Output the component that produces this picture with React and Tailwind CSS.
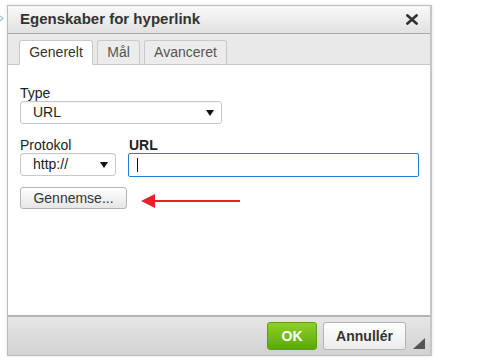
import React from 'react';

const font = { fontFamily: '"Liberation Sans", Arial, sans-serif' };

function Caret() {
  return (
    <svg width="8" height="6" viewBox="0 0 8 6" className="shrink-0">
      <path d="M0 0h8L4 6z" fill="#111" />
    </svg>
  );
}

function SelectBox({ value, className }) {
  return (
    <div
      className={`flex items-center justify-between h-[23px] pl-[12px] pr-[7px] rounded-[3px] border border-[#c8c8c8] bg-white text-[14px] text-[#222] shadow-[inset_0_1px_1px_rgba(0,0,0,0.04)] ${className}`}
    >
      <span>{value}</span>
      <Caret />
    </div>
  );
}

export default function App() {
  return (
    <div className="w-[500px] h-[362px] bg-white relative overflow-hidden" style={font}>
      {/* little leftover icon peeking in */}
      <svg width="5" height="8" viewBox="0 0 5 8" className="absolute left-0 top-[15px]">
        <path d="M0 1 L3 3.5 L0 6" stroke="#9fc3dc" strokeWidth="1.3" fill="none" />
      </svg>

      <div className="pl-[7px] pt-[5px]">
        <div className="w-[425px] h-[351px] flex flex-col border border-[#bdbdbd] border-r-2 border-r-[#c6c6c6] bg-white shadow-[0_0_3px_rgba(0,0,0,0.12)]">
          {/* title bar */}
          <div className="h-[28px] shrink-0 flex items-center justify-between pl-[12px] pr-[12px] bg-gradient-to-b from-[#f9f9f9] to-[#e1e1e1] border-b border-[#a9a9a9]">
            <span className="text-[15px] font-bold text-[#333]">Egenskaber for hyperlink</span>
            <svg width="12" height="11" viewBox="0 0 12 11">
              <path d="M1.5 1.5 L10.5 9.5 M10.5 1.5 L1.5 9.5" stroke="#333" strokeWidth="2.6" strokeLinecap="square" />
            </svg>
          </div>

          {/* tabs */}
          <div className="h-[31px] shrink-0 flex items-end gap-[4px] pl-[11px] bg-[#e9e9e9] border-b border-[#c9c9c9]">
            <div className="h-[25px] -mb-px w-[74px] flex items-center justify-center bg-white border border-[#c9c9c9] border-b-white rounded-t-[3px] text-[14px] text-[#333]">
              Generelt
            </div>
            <div className="h-[24px] w-[43px] flex items-center justify-center bg-[#ececec] border border-[#c9c9c9] border-b-0 rounded-t-[3px] text-[14px] text-[#555]">
              Mål
            </div>
            <div className="h-[24px] w-[83px] flex items-center justify-center bg-[#ececec] border border-[#c9c9c9] border-b-0 rounded-t-[3px] text-[14px] text-[#555]">
              Avanceret
            </div>
          </div>

          {/* body */}
          <div className="flex-1 px-[12px] pt-[20px] text-[#222]">
            <div className="text-[14px] leading-[16px]">Type</div>
            <SelectBox value="URL" className="w-[202px]" />

            <div className="flex gap-[12px] mt-[13px]">
              <div className="w-[96px] flex flex-col">
                <div className="text-[14px] leading-[16px]">Protokol</div>
                <SelectBox value="http://" className="w-[96px]" />
              </div>
              <div className="flex flex-col">
                <div className="text-[14px] leading-[16px] font-bold pl-[1px]">URL</div>
                <div className="w-[291px] h-[24px] border-[1.5px] border-[#1d7fd8] rounded-[2px] flex items-center pl-[8px]">
                  <div className="w-px h-[14px] bg-[#111]" />
                </div>
              </div>
            </div>

            <div className="flex items-center mt-[10px]">
              <button className="w-[107px] h-[22px] rounded-[3px] border border-[#b3b3b3] bg-gradient-to-b from-[#ffffff] to-[#e6e6e6] text-[14px] text-[#333] flex items-center justify-center">
                Gennemse...
              </button>
              <svg width="100" height="16" viewBox="0 0 100 16" className="ml-[14px] mt-[6px]">
                <path d="M0 8 L14 1 L14 15 Z" fill="#e5222a" />
                <path d="M12 8 H99" stroke="#e5222a" strokeWidth="2" />
              </svg>
            </div>
          </div>

          {/* footer */}
          <div className="h-[40px] shrink-0 flex items-center justify-end bg-gradient-to-b from-[#e6e6e6] to-[#d2d2d2] border-t-2 border-[#b4b4b4] pr-[5px] relative">
            <button className="w-[50px] h-[28px] rounded-[3px] border border-[#5c9e14] bg-gradient-to-b from-[#8fd124] to-[#5aa80e] text-[14px] font-bold text-white flex items-center justify-center">
              OK
            </button>
            <button className="ml-[6px] w-[83px] h-[28px] rounded-[3px] border border-[#b3b3b3] bg-gradient-to-b from-[#ffffff] to-[#ececec] text-[14px] font-bold text-[#333] flex items-center justify-center">
              Annullér
            </button>
            <svg width="12" height="11" viewBox="0 0 12 11" className="ml-[7px] mt-[14px]">
              <path d="M12 0 L12 11 L0 11 Z" fill="#555" />
            </svg>
          </div>
        </div>
      </div>
    </div>
  );
}
